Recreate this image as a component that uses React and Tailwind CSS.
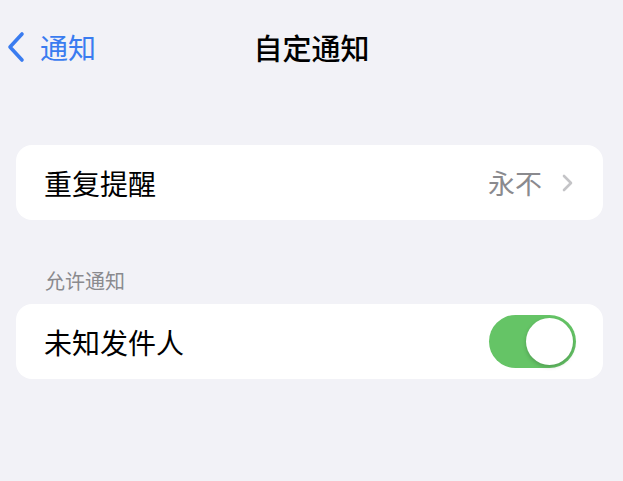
import React from "react";

export default function App() {
  return (
    <div
      className="w-full h-[481px] bg-[#f2f2f7] overflow-hidden"
      style={{ fontFamily: '"Noto Sans CJK SC", "Noto Sans", sans-serif' }}
    >
      {/* Nav bar */}
      <div className="grid grid-cols-[1fr_auto_1fr] items-center h-[40px] mt-[27px]">
        <div className="flex items-center pl-[6px]">
          <svg width="20" height="32" viewBox="0 0 20 32" className="shrink-0">
            <path
              d="M16 3 L4 16 L16 29"
              fill="none"
              stroke="#3a7cf0"
              strokeWidth="3.6"
              strokeLinecap="round"
              strokeLinejoin="round"
            />
          </svg>
          <span className="ml-[14px] text-[28px] leading-none text-[#3a7cf0]">通知</span>
        </div>
        <div className="text-[29px] leading-none font-medium text-black">自定通知</div>
        <div />
      </div>

      {/* Card 1 */}
      <div className="mt-[78px] ml-[16px] w-[587px] h-[75px] bg-white rounded-[16px] flex items-center justify-between pl-[28px] pr-[29px]">
        <span className="text-[28px] leading-none text-black">重复提醒</span>
        <div className="flex items-center">
          <span className="text-[27px] leading-none text-[#8a8a8e]">永不</span>
          <svg width="12" height="18" viewBox="0 0 12 18" className="ml-[20px]">
            <path
              d="M2 2 L9 9 L2 16"
              fill="none"
              stroke="#c4c4c7"
              strokeWidth="2.6"
              strokeLinecap="round"
              strokeLinejoin="round"
            />
          </svg>
        </div>
      </div>

      {/* Section header */}
      <div className="mt-[51px] ml-[45px] text-[20px] leading-none text-[#8a8a8e]">允许通知</div>

      {/* Card 2 */}
      <div className="mt-[13px] ml-[16px] w-[587px] h-[75px] bg-white rounded-[16px] flex items-center justify-between pl-[28px] pr-[27px]">
        <span className="text-[28px] leading-none text-black">未知发件人</span>
        <div className="w-[87px] h-[53px] rounded-full bg-[#65c466] flex items-center justify-end p-[3px]">
          <div className="w-[47px] h-[47px] rounded-full bg-white shadow-[0_2px_4px_rgba(0,0,0,0.2)]" />
        </div>
      </div>
    </div>
  );
}
